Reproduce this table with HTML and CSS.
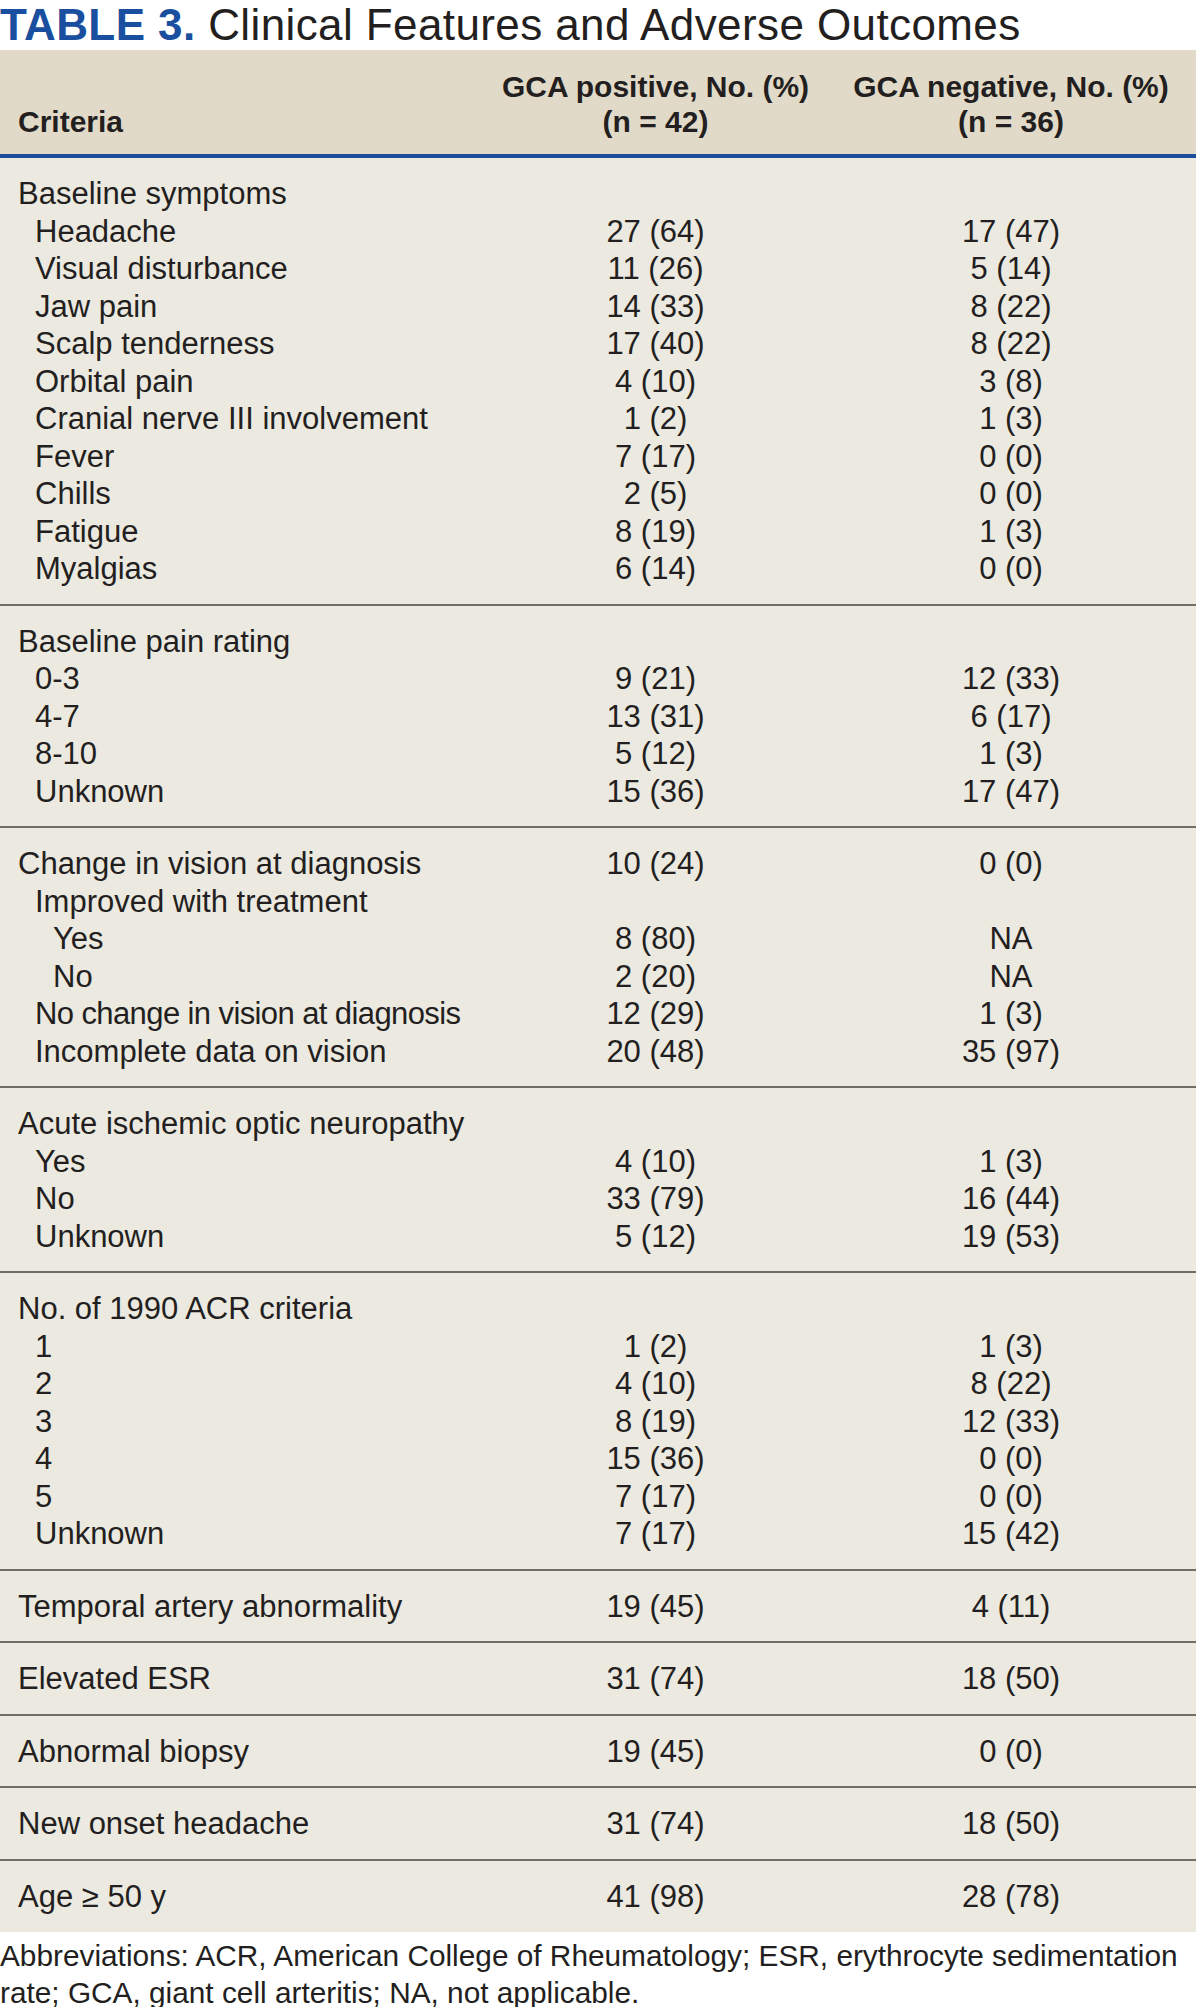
FILE: index.html
```html
<!DOCTYPE html>
<html lang="en">
<head>
<meta charset="utf-8">
<title>Table 3. Clinical Features and Adverse Outcomes</title>
<link rel="stylesheet" href="styles.css">
</head>
<body>
<h1 class="title"><span class="title-label">TABLE 3.</span> Clinical Features and Adverse Outcomes</h1>

<div class="table">
  <div class="head">
    <div class="hcell hcell-left">Criteria</div>
    <div class="hcell">GCA positive, No. (%)<br>(n = 42)</div>
    <div class="hcell">GCA negative, No. (%)<br>(n = 36)</div>
  </div>

  <div class="group">
    <div class="row"><div class="lab">Baseline symptoms</div><div class="val"></div><div class="val"></div></div>
    <div class="row"><div class="lab in1">Headache</div><div class="val">27 (64)</div><div class="val">17 (47)</div></div>
    <div class="row"><div class="lab in1">Visual disturbance</div><div class="val">11 (26)</div><div class="val">5 (14)</div></div>
    <div class="row"><div class="lab in1">Jaw pain</div><div class="val">14 (33)</div><div class="val">8 (22)</div></div>
    <div class="row"><div class="lab in1">Scalp tenderness</div><div class="val">17 (40)</div><div class="val">8 (22)</div></div>
    <div class="row"><div class="lab in1">Orbital pain</div><div class="val">4 (10)</div><div class="val">3 (8)</div></div>
    <div class="row"><div class="lab in1">Cranial nerve III involvement</div><div class="val">1 (2)</div><div class="val">1 (3)</div></div>
    <div class="row"><div class="lab in1">Fever</div><div class="val">7 (17)</div><div class="val">0 (0)</div></div>
    <div class="row"><div class="lab in1">Chills</div><div class="val">2 (5)</div><div class="val">0 (0)</div></div>
    <div class="row"><div class="lab in1">Fatigue</div><div class="val">8 (19)</div><div class="val">1 (3)</div></div>
    <div class="row"><div class="lab in1">Myalgias</div><div class="val">6 (14)</div><div class="val">0 (0)</div></div>
  </div>

  <div class="group">
    <div class="row"><div class="lab">Baseline pain rating</div><div class="val"></div><div class="val"></div></div>
    <div class="row"><div class="lab in1">0-3</div><div class="val">9 (21)</div><div class="val">12 (33)</div></div>
    <div class="row"><div class="lab in1">4-7</div><div class="val">13 (31)</div><div class="val">6 (17)</div></div>
    <div class="row"><div class="lab in1">8-10</div><div class="val">5 (12)</div><div class="val">1 (3)</div></div>
    <div class="row"><div class="lab in1">Unknown</div><div class="val">15 (36)</div><div class="val">17 (47)</div></div>
  </div>

  <div class="group">
    <div class="row"><div class="lab">Change in vision at diagnosis</div><div class="val">10 (24)</div><div class="val">0 (0)</div></div>
    <div class="row"><div class="lab in1">Improved with treatment</div><div class="val"></div><div class="val"></div></div>
    <div class="row"><div class="lab in2">Yes</div><div class="val">8 (80)</div><div class="val">NA</div></div>
    <div class="row"><div class="lab in2">No</div><div class="val">2 (20)</div><div class="val">NA</div></div>
    <div class="row"><div class="lab in1 tight">No change in vision at diagnosis</div><div class="val">12 (29)</div><div class="val">1 (3)</div></div>
    <div class="row"><div class="lab in1">Incomplete data on vision</div><div class="val">20 (48)</div><div class="val">35 (97)</div></div>
  </div>

  <div class="group">
    <div class="row"><div class="lab">Acute ischemic optic neuropathy</div><div class="val"></div><div class="val"></div></div>
    <div class="row"><div class="lab in1">Yes</div><div class="val">4 (10)</div><div class="val">1 (3)</div></div>
    <div class="row"><div class="lab in1">No</div><div class="val">33 (79)</div><div class="val">16 (44)</div></div>
    <div class="row"><div class="lab in1">Unknown</div><div class="val">5 (12)</div><div class="val">19 (53)</div></div>
  </div>

  <div class="group">
    <div class="row"><div class="lab">No. of 1990 ACR criteria</div><div class="val"></div><div class="val"></div></div>
    <div class="row"><div class="lab in1">1</div><div class="val">1 (2)</div><div class="val">1 (3)</div></div>
    <div class="row"><div class="lab in1">2</div><div class="val">4 (10)</div><div class="val">8 (22)</div></div>
    <div class="row"><div class="lab in1">3</div><div class="val">8 (19)</div><div class="val">12 (33)</div></div>
    <div class="row"><div class="lab in1">4</div><div class="val">15 (36)</div><div class="val">0 (0)</div></div>
    <div class="row"><div class="lab in1">5</div><div class="val">7 (17)</div><div class="val">0 (0)</div></div>
    <div class="row"><div class="lab in1">Unknown</div><div class="val">7 (17)</div><div class="val">15 (42)</div></div>
  </div>

  <div class="group">
    <div class="row"><div class="lab">Temporal artery abnormality</div><div class="val">19 (45)</div><div class="val">4 (11)</div></div>
  </div>

  <div class="group">
    <div class="row"><div class="lab">Elevated ESR</div><div class="val">31 (74)</div><div class="val">18 (50)</div></div>
  </div>

  <div class="group">
    <div class="row"><div class="lab">Abnormal biopsy</div><div class="val">19 (45)</div><div class="val">0 (0)</div></div>
  </div>

  <div class="group">
    <div class="row"><div class="lab">New onset headache</div><div class="val">31 (74)</div><div class="val">18 (50)</div></div>
  </div>

  <div class="group group-last">
    <div class="row"><div class="lab">Age ≥ 50 y</div><div class="val">41 (98)</div><div class="val">28 (78)</div></div>
  </div>
</div>

<p class="note">Abbreviations: ACR, American College of Rheumatology; ESR, erythrocyte sedimentation rate; GCA, giant cell arteritis; NA, not applicable.</p>
</body>
</html>
```

FILE: styles.css
```css
html, body {
  margin: 0;
  padding: 0;
  background: #ffffff;
}

body {
  font-family: "Liberation Sans", Arial, sans-serif;
  color: #231f20;
  width: 1196px;
}

.title {
  margin: 0;
  font-size: 44px;
  line-height: 50px;
  letter-spacing: 0.4px;
  font-weight: normal;
  color: #231f20;
  white-space: nowrap;
}

.title-label {
  font-weight: bold;
  color: #1a4f9f;
}

.table {
  background: #ece9e0;
}

.head {
  display: grid;
  grid-template-columns: 485px 341px 370px;
  background: #e2dac8;
  border-bottom: 4px solid #1d4e9b;
  height: 108px;
  box-sizing: border-box;
  font-weight: bold;
  font-size: 30px;
  line-height: 35px;
}

.hcell {
  display: flex;
  flex-direction: column;
  justify-content: flex-end;
  text-align: center;
  padding-bottom: 15px;
}

.hcell-left {
  text-align: left;
  padding-left: 18px;
}

.group {
  padding: 17px 0 16px;
  border-bottom: 2px solid #6f6e64;
}

.group-last {
  border-bottom: none;
  padding-bottom: 17px;
}

.row {
  display: grid;
  grid-template-columns: 485px 341px 370px;
  font-size: 31px;
  line-height: 37.5px;
  height: 37.5px;
}

.lab {
  padding-left: 18px;
  white-space: nowrap;
}

.lab.in1 {
  padding-left: 35px;
}

.lab.in2 {
  padding-left: 53px;
}

.lab.tight {
  letter-spacing: -0.6px;
}

.val {
  text-align: center;
  white-space: nowrap;
}

.note {
  margin: 5px 0 0;
  font-size: 29.8px;
  line-height: 37px;
  color: #231f20;
}
```
